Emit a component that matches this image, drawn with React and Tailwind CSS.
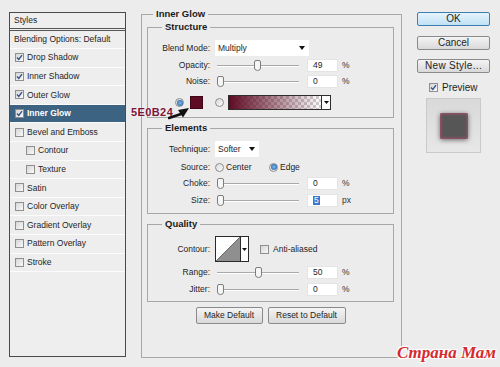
import React from "react";

const Check = ({ checked }) => (
  <span className="w-[9px] h-[9px] shrink-0 border border-[#8f8f8f] bg-linear-to-br from-[#d6d6d6] to-[#f9f9f9] flex items-center justify-center">
    {checked && (
      <svg width="7" height="7" viewBox="0 0 7 7">
        <path d="M1 3.6 L2.8 5.4 L6 1.2" fill="none" stroke="#34538a" strokeWidth="1.4" />
      </svg>
    )}
  </span>
);

const Radio = ({ on }) => (
  <span className="w-[9px] h-[9px] shrink-0 rounded-full border border-[#8d8d8d] bg-linear-to-br from-[#d9d9d9] to-[#fbfbfb] flex items-center justify-center">
    {on && <span className="w-[6px] h-[6px] rounded-full bg-radial from-[#7fbdf0] to-[#1a52a0]" />}
  </span>
);

const Tri = () => (
  <svg width="6" height="4" viewBox="0 0 6 4" className="shrink-0">
    <polygon points="0,0 6,0 3,4" fill="#111" />
  </svg>
);

const Label = ({ children }) => (
  <div className="w-[62px] shrink-0 text-right">{children}</div>
);

const Slider = ({ value }) => (
  <div className="relative w-[82px] h-[13px] ml-[7px] shrink-0">
    <div className="absolute left-0 right-0 top-[6px] h-[1px] bg-[#a9a9a9] shadow-[0_1px_0_#ffffff]" />
    <svg
      className="absolute top-[1px]"
      style={{ left: Math.round(value * 0.75) }}
      width="7"
      height="11"
      viewBox="0 0 7 11"
    >
      <path
        d="M0.5 2 Q0.5 0.5 2 0.5 H5 Q6.5 0.5 6.5 2 V8 Q6.5 10.5 3.5 10.5 Q0.5 10.5 0.5 8 Z"
        fill="#f6f6f6"
        stroke="#7c7c7c"
        strokeWidth="1"
      />
    </svg>
  </div>
);

const NumBox = ({ children }) => (
  <div className="ml-[8px] w-[31px] h-[13px] shrink-0 bg-white border border-[#e4e4e4] flex items-center pl-[5px]">
    {children}
  </div>
);

const SliderRow = ({ label, value, num, unit, mt, selected }) => (
  <div className={"flex items-center h-[13px] leading-none " + mt}>
    <Label>{label}</Label>
    <Slider value={value} />
    <NumBox>
      {selected ? (
        <span className="bg-[#3a78cf] text-white px-[1px]">{num}</span>
      ) : (
        num
      )}
    </NumBox>
    <span className="ml-[4px] text-[#333]">{unit}</span>
  </div>
);

const Group = ({ title, className, legendClass, children }) => (
  <fieldset className={"border border-[#a7a7a7] min-w-0 " + className}>
    <legend className={"px-[3px] font-bold text-[9.5px] leading-[12px] text-[#1a1a1a] " + legendClass}>
      {title}
    </legend>
    {children}
  </fieldset>
);

const Btn = ({ children, className }) => (
  <div
    className={
      "h-[17px] flex items-center justify-center border border-[#8a8a8a] rounded-[2px] bg-linear-to-b from-[#f4f4f4] to-[#d9d9d9] " +
      className
    }
  >
    {children}
  </div>
);

const styleItems = [
  { t: "Drop Shadow", c: true },
  { t: "Inner Shadow", c: true },
  { t: "Outer Glow", c: true },
  { t: "Inner Glow", c: true, sel: true },
  { t: "Bevel and Emboss" },
  { t: "Contour", sub: true },
  { t: "Texture", sub: true },
  { t: "Satin" },
  { t: "Color Overlay" },
  { t: "Gradient Overlay" },
  { t: "Pattern Overlay" },
  { t: "Stroke" },
];

export default function App() {
  return (
    <div className="relative w-[500px] h-[367px] overflow-hidden bg-[#ececec] flex items-start font-['Liberation_Sans',Arial,sans-serif] text-[8.5px] text-[#1e1e1e]">
      {/* Left styles panel */}
      <div className="ml-[9px] mt-[12px] w-[117px] h-[345px] shrink-0 border border-[#4a4a4a] bg-[#eeeeee] flex flex-col">
        <div className="h-[18px] shrink-0 flex items-center pl-[4px] border-b-[3px] border-double border-[#555]">
          Styles
        </div>
        <div className="h-[18px] shrink-0 flex items-center pl-[4px] border-b border-[#fbfbfb]">
          Blending Options: Default
        </div>
        {styleItems.map((it) => (
          <div
            key={it.t}
            className={
              "h-[18.6px] shrink-0 flex items-center gap-[3px] border-b border-[#fbfbfb] " +
              (it.sub ? "pl-[16px] " : "pl-[5px] ") +
              (it.sel ? "bg-[#3c6382] text-white font-bold" : "")
            }
          >
            <Check checked={it.c} />
            <span>{it.t}</span>
          </div>
        ))}
      </div>

      {/* Main settings */}
      <Group title="Inner Glow" className="ml-[15px] mt-[8px] w-[261px] shrink-0" legendClass="ml-[11px]">
        <div className="pl-[5px] pr-[7px] pb-[33px] flex flex-col">
          <Group title="Structure" className="mt-[1px]" legendClass="ml-[14px]">
            <div className="flex flex-col pb-[7px]">
              <div className="mt-[7px] flex items-center h-[16px] leading-none">
                <Label>Blend Mode:</Label>
                <div className="ml-[5px] w-[94px] h-[16px] bg-white flex items-center justify-between pl-[3px] pr-[4px]">
                  <span>Multiply</span>
                  <Tri />
                </div>
              </div>
              <SliderRow label="Opacity:" value={49} num="49" unit="%" mt="mt-[3px]" />
              <SliderRow label="Noise:" value={0} num="0" unit="%" mt="mt-[3px]" />
              <div className="mt-[7px] h-[15px] flex items-center pl-[27px]">
                <Radio on />
                <div className="ml-[6px] w-[13px] h-[13px] bg-[#5e0b24] border border-[#3e0617]" />
                <div className="ml-[12px]">
                  <Radio />
                </div>
                <div className="ml-[4px] w-[103px] h-[15px] border border-[#2e2e2e] flex">
                  <div className="flex-1 bg-[image:repeating-conic-gradient(#cfcfcf_0_25%,#ffffff_0_50%)] bg-[length:6px_6px]">
                    <div className="w-full h-full bg-linear-to-r from-[#5e0b24] to-transparent" />
                  </div>
                  <div className="w-[9px] border-l border-[#2e2e2e] bg-white flex items-center justify-center">
                    <svg width="5" height="3" viewBox="0 0 5 3">
                      <polygon points="0,0 5,0 2.5,3" fill="#111" />
                    </svg>
                  </div>
                </div>
              </div>
            </div>
          </Group>

          <Group title="Elements" className="mt-[4px]" legendClass="ml-[14px]">
            <div className="flex flex-col pb-[6px]">
              <div className="mt-[7px] flex items-center h-[16px] leading-none">
                <Label>Technique:</Label>
                <div className="ml-[5px] w-[44px] h-[16px] bg-white flex items-center justify-between pl-[3px] pr-[4px]">
                  <span>Softer</span>
                  <Tri />
                </div>
              </div>
              <div className="mt-[4px] flex items-center h-[12px] leading-none">
                <Label>Source:</Label>
                <div className="ml-[5px] w-[54px] flex items-center gap-[2px]">
                  <Radio />
                  <span>Center</span>
                </div>
                <div className="flex items-center gap-[2px]">
                  <Radio on />
                  <span>Edge</span>
                </div>
              </div>
              <SliderRow label="Choke:" value={0} num="0" unit="%" mt="mt-[4px]" />
              <SliderRow label="Size:" value={0} num="5" unit="px" mt="mt-[4px]" selected />
            </div>
          </Group>

          <Group title="Quality" className="mt-[4px]" legendClass="ml-[14px]">
            <div className="flex flex-col pb-[5px]">
              <div className="mt-[6px] flex items-center h-[26px] leading-none">
                <Label>Contour:</Label>
                <div className="ml-[5px] w-[34px] h-[26px] border border-[#2a2a2a] bg-white flex">
                  <svg width="24" height="24" viewBox="0 0 24 24" className="shrink-0">
                    <polygon points="0,24 24,0 24,24" fill="#8f8f8f" />
                    <line x1="0" y1="24" x2="24" y2="0" stroke="#555" strokeWidth="0.8" />
                  </svg>
                  <div className="flex-1 border-l border-[#2a2a2a] flex items-center justify-center">
                    <svg width="5" height="3" viewBox="0 0 5 3">
                      <polygon points="0,0 5,0 2.5,3" fill="#111" />
                    </svg>
                  </div>
                </div>
                <div className="ml-[11px] flex items-center gap-[4px]">
                  <Check />
                  <span>Anti-aliased</span>
                </div>
              </div>
              <SliderRow label="Range:" value={50} num="50" unit="%" mt="mt-[4px]" />
              <SliderRow label="Jitter:" value={0} num="0" unit="%" mt="mt-[4px]" />
            </div>
          </Group>

          <div className="mt-[5px] flex justify-center gap-[5px] leading-none">
            <Btn className="w-[67px]">Make Default</Btn>
            <Btn className="w-[78px]">Reset to Default</Btn>
          </div>
        </div>
      </Group>

      {/* Right column */}
      <div className="ml-[15px] mt-[12px] w-[73px] shrink-0 flex flex-col text-[10px] leading-none">
        <div className="h-[14px] flex items-center justify-center border border-[#3c7fb1] rounded-[2px] bg-linear-to-b from-[#e6f4fc] to-[#bfe1f5]">
          OK
        </div>
        <div className="mt-[10px] h-[14px] flex items-center justify-center border border-[#8a8a8a] rounded-[2px] bg-linear-to-b from-[#f4f4f4] to-[#d9d9d9]">
          Cancel
        </div>
        <div className="mt-[9px] h-[14px] flex items-center justify-center border border-[#8a8a8a] rounded-[2px] bg-linear-to-b from-[#f4f4f4] to-[#d9d9d9] tracking-[0.3px]">
          New Style...
        </div>
        <div className="mt-[10px] ml-[12px] h-[9px] flex items-center gap-[4px]">
          <Check checked />
          <span>Preview</span>
        </div>
        <div className="mt-[6px] ml-[9px] w-[55px] h-[55px] border border-[#cacaca] bg-linear-to-b from-[#d9d9d9] to-[#e7e7e7] flex items-center justify-center">
          <div className="w-[28px] h-[26px] rounded-[2px] bg-[#565656] shadow-[inset_0_0_3px_1px_#a4506a,0_1px_5px_rgba(0,0,0,0.55)]" />
        </div>
      </div>

      {/* annotation overlay */}
      <div className="absolute left-[131px] top-[107px] font-['Liberation_Sans',Arial,sans-serif] font-bold text-[11px] leading-none tracking-[0.4px] text-[#7a1536] [text-shadow:0_0_1px_#fff]">
        5E0B24
      </div>
      <svg className="absolute left-[168px] top-[104px]" width="24" height="16" viewBox="0 0 24 16">
        <path d="M1 14 L13 10" stroke="#111" strokeWidth="2.6" strokeLinecap="round" />
        <polygon points="21,4 10,6 15,13.5" fill="#111" />
      </svg>

      {/* watermark */}
      <div className="absolute right-[4px] bottom-[6px] font-['Liberation_Serif',serif] italic font-bold text-[17px] leading-none text-[#d42a2e] [text-shadow:1px_1px_0_#fff,-1px_-1px_0_#fff,1px_-1px_0_#fff,-1px_1px_0_#fff,0_0_3px_#fff]">
        Страна Мам
      </div>
    </div>
  );
}
